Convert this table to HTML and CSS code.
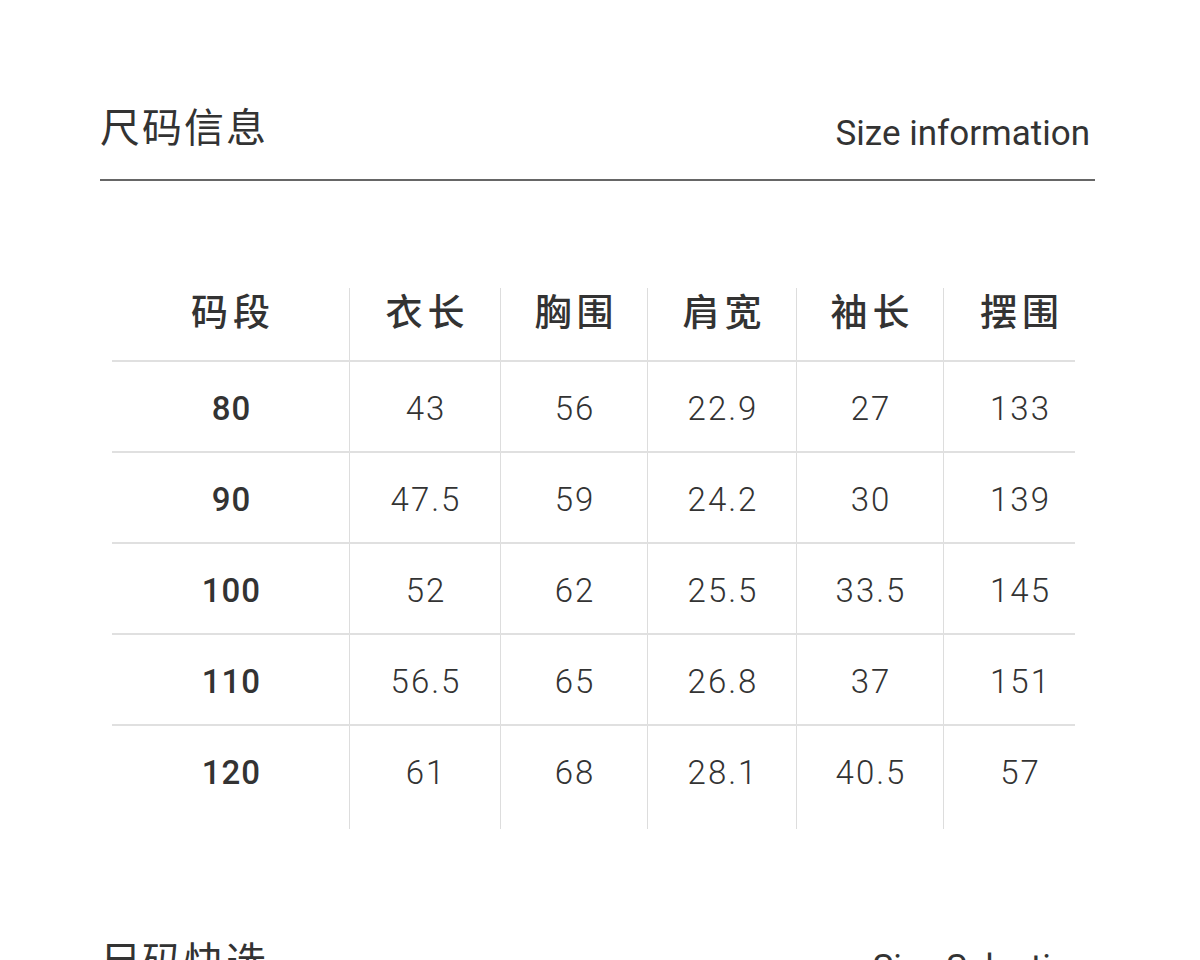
FILE: index.html
```html
<!DOCTYPE html>
<html lang="zh-CN">
<head>
<meta charset="utf-8">
<title>尺码信息</title>
<link rel="stylesheet" href="styles.css">
</head>
<body>
<section class="section">
  <div class="head">
    <h2 class="title-cn">尺码信息</h2>
    <span class="title-en">Size information</span>
  </div>
  <div class="size-table">
    <div class="row head-row">
      <div class="cell">码段</div>
      <div class="cell">衣长</div>
      <div class="cell">胸围</div>
      <div class="cell">肩宽</div>
      <div class="cell">袖长</div>
      <div class="cell">摆围</div>
    </div>
    <div class="row body-row">
      <div class="cell size">80</div>
      <div class="cell">43</div>
      <div class="cell">56</div>
      <div class="cell">22.9</div>
      <div class="cell">27</div>
      <div class="cell">133</div>
    </div>
    <div class="row body-row">
      <div class="cell size">90</div>
      <div class="cell">47.5</div>
      <div class="cell">59</div>
      <div class="cell">24.2</div>
      <div class="cell">30</div>
      <div class="cell">139</div>
    </div>
    <div class="row body-row">
      <div class="cell size">100</div>
      <div class="cell">52</div>
      <div class="cell">62</div>
      <div class="cell">25.5</div>
      <div class="cell">33.5</div>
      <div class="cell">145</div>
    </div>
    <div class="row body-row">
      <div class="cell size">110</div>
      <div class="cell">56.5</div>
      <div class="cell">65</div>
      <div class="cell">26.8</div>
      <div class="cell">37</div>
      <div class="cell">151</div>
    </div>
    <div class="row body-row last">
      <div class="cell size">120</div>
      <div class="cell">61</div>
      <div class="cell">68</div>
      <div class="cell">28.1</div>
      <div class="cell">40.5</div>
      <div class="cell">57</div>
    </div>
  </div>
</section>
<section class="section">
  <div class="head">
    <h2 class="title-cn">尺码快选</h2>
    <span class="title-en">Size Selection</span>
  </div>
</section>
</body>
</html>
```
FILE: styles.css
```css
html, body {
  margin: 0;
  padding: 0;
  background: #ffffff;
}
body {
  color: #333333;
  font-family: "Roboto", "Noto Sans CJK SC", sans-serif;
  overflow: hidden;
  height: 960px;
}
.section {
  padding: 97px 105px 5px 100px;
}
.head {
  display: flex;
  justify-content: space-between;
  align-items: flex-end;
  padding-bottom: 26px;
  border-bottom: 2px solid #666666;
}
.title-cn {
  margin: 0;
  font-family: "Noto Sans CJK SC", sans-serif;
  font-weight: 400;
  font-size: 40px;
  line-height: 56px;
  letter-spacing: 2px;
  color: #333333;
}
.title-en {
  font-family: "Roboto", sans-serif;
  font-weight: 400;
  font-size: 35px;
  line-height: 40px;
  padding-right: 5px;
  margin-bottom: -1px;
  color: #333333;
}
.size-table {
  margin: 107px 0 0 12px;
  width: 983px;
}
.row {
  display: grid;
  grid-template-columns: 237px 151px 147px 149px 147px 152px;
}
.head-row {
  height: 72px;
}
.head-row .cell {
  font-family: "Noto Sans CJK SC", sans-serif;
  font-weight: 500;
  font-size: 37px;
  line-height: 44px;
  letter-spacing: 5px;
  padding-top: 0;
  padding-bottom: 28px;
  padding-left: 5px;
}
.body-row {
  height: 89px;
  padding-top: 2px;
  background: linear-gradient(#e0e0e0, #e0e0e0) no-repeat left top / 963px 2px;
}
.body-row.last {
  height: 103px;
}
.body-row.last .cell {
  padding-bottom: 14px;
}
.cell {
  display: flex;
  align-items: center;
  justify-content: center;
  font-weight: 300;
  font-size: 33px;
  letter-spacing: 2px;
  padding-left: 2px;
  padding-top: 3px;
}
.cell + .cell {
  border-left: 1px solid #dddddd;
}
.cell.size {
  font-weight: 500;
  letter-spacing: 1px;
}
```
